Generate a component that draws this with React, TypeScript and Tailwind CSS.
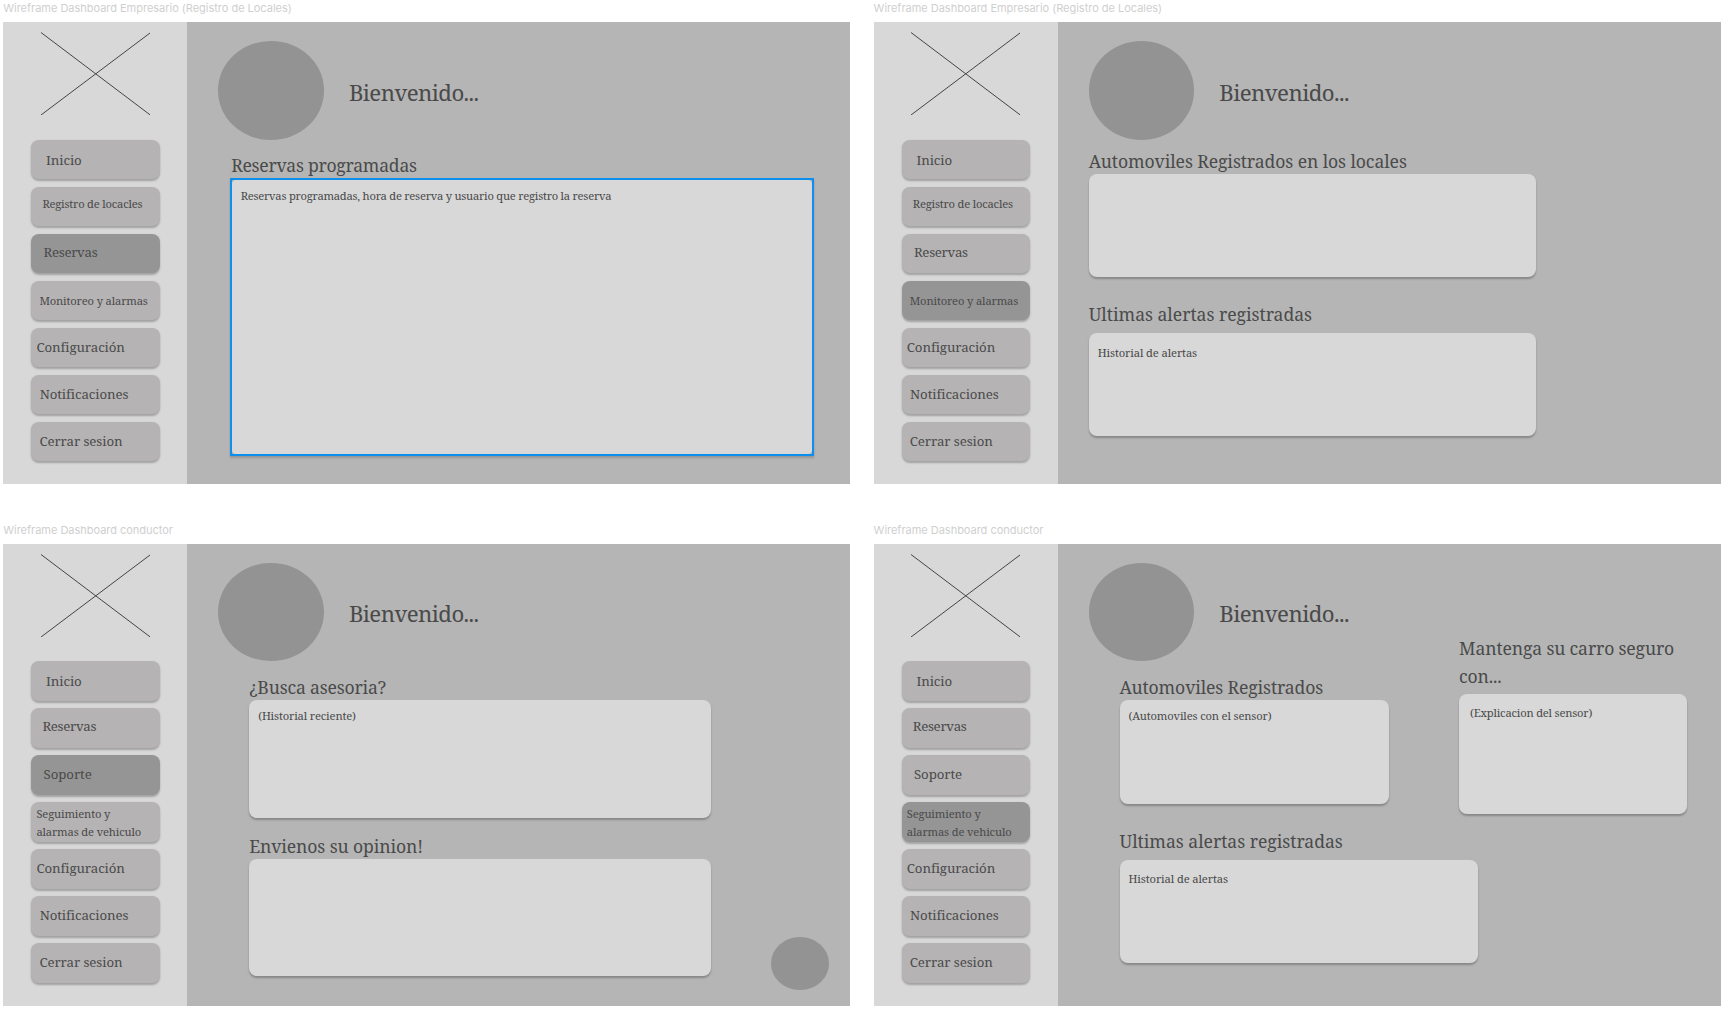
import type { ReactNode } from 'react';

type NavItem = { label: ReactNode; className: string; active?: boolean };

const LARGE = 'text-[13.3px] leading-5 tracking-[-0.1px]';
const LARGE_TIGHT = 'text-[13.3px] leading-5 tracking-[-0.33px]';
const SMALL = 'text-[11.2px] leading-5 tracking-[-0.15px]';

function NavButton({ label, className, active }: NavItem) {
  return (
    <div
      className={`h-[39.6px] w-[128.3px] rounded-lg whitespace-nowrap shadow-[0_1.5px_2px_rgba(0,0,0,0.25)] ${
        active ? 'bg-[#959595]' : 'bg-[#b5b3b4]'
      } ${className}`}
    >
      {label}
    </div>
  );
}

const inicio: NavItem = { label: 'Inicio', className: `${LARGE} pt-[10.2px] pl-[14.7px]` };
const commonEnd: NavItem[] = [
  { label: 'Configuración', className: `${LARGE} pt-[9px] pl-[5px]` },
  { label: 'Notificaciones', className: `${LARGE} pt-[9.2px] pl-[8.3px]` },
  { label: 'Cerrar sesion', className: `${LARGE} pt-[9.2px] pl-[8px]` },
];

function businessNav(active: string): NavItem[] {
  return [
    inicio,
    { label: 'Registro de locacles', className: `${SMALL} !tracking-[-0.2px] pt-[7px] pl-[11px]` },
    { label: 'Reservas', className: `${LARGE_TIGHT} pt-[8.8px] pl-[12.2px]`, active: active === 'reservas' },
    { label: 'Monitoreo y alarmas', className: `${SMALL} pt-[10px] pl-[8px]`, active: active === 'monitoreo' },
    ...commonEnd,
  ];
}

function driverNav(active: string): NavItem[] {
  return [
    inicio,
    { label: 'Reservas', className: `${LARGE_TIGHT} pt-[8px] pl-[11px]` },
    { label: 'Soporte', className: `${LARGE} pt-[8.8px] pl-[12.2px]`, active: active === 'soporte' },
    {
      label: (
        <>
          Seguimiento y<br />
          alarmas de vehiculo
        </>
      ),
      className: 'pt-[2.6px] pl-[5px] text-[11.2px] leading-[17.9px] tracking-[-0.15px]',
      active: active === 'seguimiento',
    },
    ...commonEnd,
  ];
}

function Artboard({ name, nav, children, aside }: { name: string; nav: NavItem[]; children: ReactNode; aside?: ReactNode }) {
  return (
    <section className="w-[847px]">
      <h2 className="h-[22px] pt-px font-[Inter,sans-serif] text-[11px] leading-[14px] tracking-[-0.02px] text-[#cfcfcf]">{name}</h2>
      <div className="flex h-[462px] bg-[#b5b5b5]">
        <div className="flex w-[184.2px] shrink-0 flex-col bg-[#d8d8d8] pt-[10px] pl-[28.2px]">
          <svg className="ml-[9.6px] h-[83px] w-[109px]" viewBox="0 0 109 83" fill="none" stroke="#444" strokeWidth="1">
            <path d="M0 .5 109 82.8M0 83 109 1" />
          </svg>
          <nav className="mt-[24.6px] flex flex-col gap-[7.4px]">
            {nav.map((item, i) => (
              <NavButton key={i} {...item} />
            ))}
          </nav>
        </div>
        <main className="min-w-0">
          <header className="flex h-[118px] pt-[19.3px] pl-[31px]">
            <div className="h-[98.3px] w-[105.5px] shrink-0 rounded-[50%] bg-[#939393]" />
            <h1 className="mt-[35.4px] ml-[25px] text-[22.2px] leading-8 tracking-[-0.56px] whitespace-nowrap">Bienvenido...</h1>
          </header>
          {children}
        </main>
        {aside}
      </div>
    </section>
  );
}

function Heading({ className, children }: { className: string; children: ReactNode }) {
  return <h3 className={`text-[17.6px] leading-6 whitespace-nowrap ${className}`}>{children}</h3>;
}

function Card({ className, children }: { className: string; children?: ReactNode }) {
  return (
    <div className={`rounded-lg bg-[#d8d8d8] pl-[9px] shadow-[0_2px_2px_rgba(0,0,0,0.25)] whitespace-nowrap ${SMALL} ${className}`}>
      {children}
    </div>
  );
}

export default function App() {
  return (
    <div className="grid h-[1011px] w-[1730px] grid-cols-[847px_847px] grid-rows-[484px_484px] gap-x-[23.4px] gap-y-[37.6px] overflow-hidden bg-white pl-[3.2px] font-['Noto_Serif','DejaVu_Serif_Condensed',serif] text-[#4a4a4a]">
      <Artboard name="Wireframe Dashboard Empresario (Registro de Locales)" nav={businessNav('reservas')}>
        <div className="pl-[42.8px]">
          <Heading className="mt-[13.4px] ml-px tracking-[-0.27px]">Reservas programadas</Heading>
          <div className="mt-[0.6px] h-[278px] w-[584px] bg-[#0d8fee] p-[2px] shadow-[0_2px_2px_rgba(0,0,0,0.18)]">
            <div className="h-full overflow-hidden bg-[#a8a8a8]">
              <div className="h-full rounded-[4px] bg-[#d8d8d8] pt-[5.6px] pl-[8.5px] text-[11.2px] leading-5 tracking-[-0.235px] whitespace-nowrap">
                Reservas programadas, hora de reserva y usuario que registro la reserva
              </div>
            </div>
          </div>
        </div>
      </Artboard>

      <Artboard name="Wireframe Dashboard Empresario (Registro de Locales)" nav={businessNav('monitoreo')}>
        <div className="pl-[31px]">
          <Heading className="mt-[8.5px] tracking-[-0.09px]">Automoviles Registrados en los locales</Heading>
          <Card className="mt-[1.5px] h-[103px] w-[447px]" />
          <Heading className="mt-[25px] tracking-[-0.03px]">Ultimas alertas registradas</Heading>
          <Card className="mt-[7px] h-[103.4px] w-[447px] pt-[9.7px] !tracking-[-0.11px]">Historial de alertas</Card>
        </div>
      </Artboard>

      <Artboard
        name="Wireframe Dashboard conductor"
        nav={driverNav('soporte')}
        aside={<div className="mr-[21px] mb-[15.5px] ml-auto h-[53.5px] w-[58px] self-end rounded-[50%] bg-[#939393]" />}
      >
        <div className="pl-[61.8px]">
          <Heading className="mt-[13.2px] tracking-[-0.18px]">¿Busca asesoria?</Heading>
          <Card className="mt-[1.3px] h-[117.5px] w-[462px] pt-[6.2px]">(Historial reciente)</Card>
          <Heading className="mt-[16.1px] tracking-[-0.12px]">Envienos su opinion!</Heading>
          <Card className="mt-[1.2px] h-[117.3px] w-[462px]" />
        </div>
      </Artboard>

      <Artboard
        name="Wireframe Dashboard conductor"
        nav={driverNav('seguimiento')}
        aside={
          <div className="mr-[33.5px] ml-auto pt-[90px]">
            <h3 className="w-[228px] text-[17.6px] leading-[28.4px] tracking-[-0.15px] whitespace-nowrap">
              Mantenga su carro seguro
              <br />
              con...
            </h3>
            <Card className="mt-[3.5px] h-[120px] w-[228px] pt-[9px] !pl-[11px] !tracking-[-0.2px]">(Explicacion del sensor)</Card>
          </div>
        }
      >
        <div className="pl-[61.8px]">
          <Heading className="mt-[13.2px] tracking-[-0.13px]">Automoviles Registrados</Heading>
          <Card className="mt-[1.3px] h-[103.5px] w-[269.5px] pt-[5.9px]">(Automoviles con el sensor)</Card>
          <Heading className="mt-[25.2px] tracking-[-0.03px]">Ultimas alertas registradas</Heading>
          <Card className="mt-[6.8px] h-[103.5px] w-[358.5px] pt-[9.2px] !tracking-[-0.11px]">Historial de alertas</Card>
        </div>
      </Artboard>
    </div>
  );
}
